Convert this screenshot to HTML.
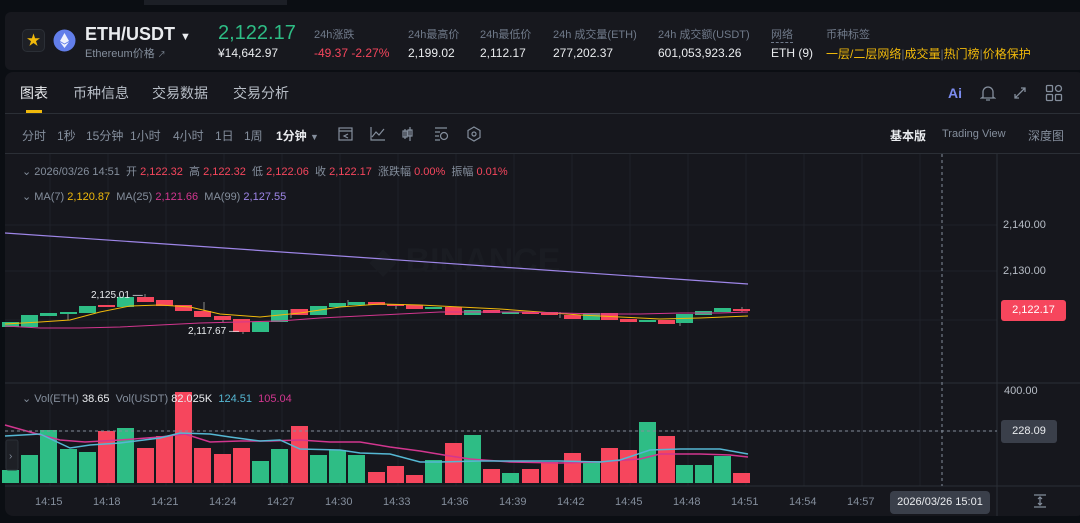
<!DOCTYPE html>
<html><head><meta charset="utf-8"><style>
*{margin:0;padding:0;box-sizing:border-box}
body{width:1080px;height:523px;overflow:hidden;background:#0b0e13;font-family:"Liberation Sans","Noto Sans CJK SC",sans-serif;position:relative;color:#eaecef}
.p{position:absolute;white-space:nowrap}
.g{color:#848e9c}
.hd{position:absolute;left:5px;top:12px;width:1080px;height:58px;background:#17181e;border-radius:6px}
.ch{position:absolute;left:5px;top:72px;width:1080px;height:444px;background:#16171d;border-radius:8px}
.lab{font-size:11px;color:#707a8a}
.val{font-size:12px;color:#eaecef}
</style></head><body>
<div class="p" style="left:144px;top:0;width:143px;height:5px;background:#1c1f26"></div>
<div class="hd"></div>
<div class="ch"></div>
<!-- header -->
<div class="p" style="left:22px;top:29px;width:23px;height:23px;border:1px solid #2b2f36;border-radius:5px;background:#1e2026;color:#f0b90b;font-size:14px;text-align:center;line-height:21px">★</div>
<svg class="p" style="left:53px;top:29px" width="23" height="23"><circle cx="11.5" cy="11.5" r="11" fill="#627eea"/><path d="M11.5 4 L7 12 L11.5 14.5 L16 12Z M7 13 L11.5 19 L16 13 L11.5 15.5Z" fill="#fff" opacity=".9"/></svg>
<div class="p" style="left:85px;top:24px;font-size:18px;font-weight:bold;color:#eaecef">ETH/USDT <span style="font-size:11px">▼</span></div>
<div class="p g" style="left:85px;top:45px;font-size:11px">Ethereum价格 <span style="font-size:8px">↗</span></div>
<div class="p" style="left:218px;top:22px;font-size:20px;color:#2ebd85">2,122.17</div>
<div class="p val" style="left:218px;top:46px">¥14,642.97</div>
<div class="p lab" style="left:314px;top:26px">24h涨跌</div>
<div class="p val" style="left:314px;top:46px;color:#f6465d">-49.37 -2.27%</div>
<div class="p lab" style="left:408px;top:26px">24h最高价</div>
<div class="p val" style="left:408px;top:46px">2,199.02</div>
<div class="p lab" style="left:480px;top:26px">24h最低价</div>
<div class="p val" style="left:480px;top:46px">2,112.17</div>
<div class="p lab" style="left:553px;top:26px">24h 成交量(ETH)</div>
<div class="p val" style="left:553px;top:46px">277,202.37</div>
<div class="p lab" style="left:658px;top:26px">24h 成交额(USDT)</div>
<div class="p val" style="left:658px;top:46px">601,053,923.26</div>
<div class="p lab" style="left:771px;top:26px;border-bottom:1px dashed #707a8a">网络</div>
<div class="p val" style="left:771px;top:46px">ETH (9)</div>
<div class="p lab" style="left:826px;top:26px">币种标签</div>
<div class="p val" style="left:826px;top:45px;color:#f0b90b">一层/二层网络<span style="color:#5e6673">|</span>成交量<span style="color:#5e6673">|</span>热门榜<span style="color:#5e6673">|</span>价格保护</div>
<!-- tabs -->
<div class="p" style="left:20px;top:83px;font-size:14px;color:#eaecef">图表</div>
<div class="p" style="left:26px;top:110px;width:16px;height:3px;background:#f0b90b"></div>
<div class="p g" style="left:73px;top:83px;font-size:14px;color:#b7bdc6">币种信息</div>
<div class="p g" style="left:152px;top:83px;font-size:14px;color:#b7bdc6">交易数据</div>
<div class="p g" style="left:233px;top:83px;font-size:14px;color:#b7bdc6">交易分析</div>
<div class="p" style="left:5px;top:113px;width:1075px;height:1px;background:#2b2f36"></div>
<div class="p" style="left:948px;top:85px;font-size:14px;font-weight:bold;color:#7c8cf0">Ai</div>
<svg class="p" style="left:980px;top:84px" width="16" height="18" fill="none" stroke="#848e9c" stroke-width="1.3"><path d="M3 13 L3 8 A5 5 0 0 1 13 8 L13 13 L14.5 14 L1.5 14Z M6 16 L10 16"/></svg>
<svg class="p" style="left:1012px;top:85px" width="16" height="16" stroke="#848e9c" stroke-width="1.3" fill="none"><path d="M3 13 L13 3 M9 3 L13 3 L13 7 M3 9 L3 13 L7 13"/></svg>
<svg class="p" style="left:1045px;top:84px" width="18" height="18" fill="none" stroke="#848e9c" stroke-width="1.3"><rect x="1.5" y="1.5" width="6" height="6" rx="1"/><circle cx="13.5" cy="4.5" r="3"/><rect x="1.5" y="10.5" width="6" height="6" rx="1"/><rect x="10.5" y="10.5" width="6" height="6" rx="1"/></svg>
<!-- toolbar -->
<div class="p g" style="left:22px;top:127px;font-size:12px">分时</div>
<div class="p g" style="left:57px;top:127px;font-size:12px">1秒</div>
<div class="p g" style="left:86px;top:127px;font-size:12px">15分钟</div>
<div class="p g" style="left:130px;top:127px;font-size:12px">1小时</div>
<div class="p g" style="left:173px;top:127px;font-size:12px">4小时</div>
<div class="p g" style="left:215px;top:127px;font-size:12px">1日</div>
<div class="p g" style="left:244px;top:127px;font-size:12px">1周</div>
<div class="p" style="left:276px;top:127px;font-size:12px;font-weight:bold;color:#eaecef">1分钟 <span style="color:#848e9c;font-size:9px">▼</span></div>
<svg class="p" style="left:336px;top:125px" width="150" height="18" fill="none" stroke="#848e9c" stroke-width="1.2">
<rect x="3" y="3" width="13" height="12"/><path d="M3 6 H16 M12 9 L8 11 L12 13"/>
<path d="M35 2 V15 H49 M36 12 L40 7 L43 10 L48 4"/>
<path d="M69 4 V14 M74 2 V16 M67 6 H71 V12 H67Z M72 5 H76 V11 H72Z"/>
<path d="M99 3 H111 M99 7 H104 M99 11 H103 M99 15 H104"/><circle cx="108" cy="11" r="3.5"/>
<path d="M138 2 L144 5.5 V12.5 L138 16 L132 12.5 V5.5Z"/><circle cx="138" cy="9" r="2"/>
</svg>
<div class="p" style="left:890px;top:127px;font-size:12px;font-weight:bold;color:#eaecef">基本版</div>
<div class="p g" style="left:942px;top:128px;font-size:11px">Trading View</div>
<div class="p g" style="left:1028px;top:127px;font-size:12px">深度图</div>
<div class="p" style="left:5px;top:153px;width:1075px;height:1px;background:#2b2f36"></div>
<!-- chart -->
<svg class="p" style="left:0;top:0" width="1080" height="523">
<g stroke="#1f2229" stroke-width="1">
<path d="M50 154V486M108 154V486M166 154V486M224 154V486M282 154V486M340 154V486M398 154V486M456 154V486M514 154V486M572 154V486M630 154V486M688 154V486M746 154V486M804 154V486M862 154V486M920 154V486"/>
<path d="M5 225H997M5 271H997M5 320H997M5 431H997"/>
</g>
<path d="M5 383H1080M5 486H1080M997 154V516" stroke="#2b2f36"/>
<text x="370" y="272" font-size="34" font-weight="bold" fill="#1a1c22" font-family="Liberation Sans">◆ BINANCE</text>
<path d="M5 233 L748 284" stroke="#9e86e8" stroke-width="1.2"/>
<g stroke-width="1">
<path d="M68 312V320M145 294V302M204 302V316M223 316V322M243 319V334M291 309V318M348 300V306M396 304V309M560 312V318M680 314V326M742 307V312" stroke="#888"/>
</g>
<g fill="#2ebd85">
<rect x="2" y="322" width="17" height="5"/><rect x="21" y="315" width="17" height="12"/><rect x="40" y="313" width="17" height="3"/><rect x="60" y="312" width="17" height="2"/><rect x="79" y="306" width="17" height="7"/><rect x="117" y="297" width="17" height="10"/><rect x="252" y="322" width="17" height="10"/><rect x="271" y="310" width="17" height="12"/><rect x="310" y="306" width="17" height="9"/><rect x="329" y="303" width="17" height="4"/><rect x="348" y="302" width="17" height="3"/><rect x="425" y="307" width="17" height="2"/><rect x="464" y="310" width="17" height="5"/><rect x="502" y="312" width="17" height="2"/><rect x="583" y="313" width="17" height="7"/><rect x="639" y="320" width="17" height="2"/><rect x="676" y="314" width="17" height="9"/><rect x="695" y="311" width="17" height="4"/><rect x="714" y="308" width="17" height="4"/>
</g>
<g fill="#f6465d">
<rect x="98" y="305" width="17" height="2"/><rect x="137" y="297" width="17" height="5"/><rect x="156" y="300" width="17" height="6"/><rect x="175" y="305" width="17" height="6"/><rect x="194" y="311" width="17" height="6"/><rect x="214" y="316" width="17" height="4"/><rect x="233" y="319" width="17" height="13"/><rect x="291" y="309" width="17" height="6"/><rect x="368" y="302" width="17" height="3"/><rect x="387" y="304" width="17" height="2"/><rect x="406" y="305" width="17" height="4"/><rect x="445" y="307" width="17" height="8"/><rect x="483" y="310" width="17" height="3"/><rect x="522" y="312" width="17" height="2"/><rect x="541" y="312" width="17" height="3"/><rect x="564" y="315" width="17" height="4"/><rect x="601" y="313" width="17" height="7"/><rect x="620" y="319" width="17" height="3"/><rect x="658" y="320" width="17" height="4"/><rect x="733" y="309" width="17" height="2"/>
</g>
<polyline fill="none" stroke="#f0b90b" stroke-width="1" points="5,324 40,322 70,320 100,312 130,306 160,305 190,307 220,314 260,317 300,313 340,307 380,304 420,305 460,307 500,309 540,312 580,315 620,317 660,319 700,318 748,316"/>
<polyline fill="none" stroke="#d2368f" stroke-width="1" points="5,326 40,328 80,328 120,327 160,325 200,323 240,322 280,321 320,318 360,316 400,314 440,312 480,312 520,312 560,313 600,314 640,314 680,313 720,313 748,312"/>
<text x="91" y="298" font-size="10" fill="#eaecef">2,125.01 —</text>
<text x="188" y="334" font-size="10" fill="#eaecef">2,117.67 —</text>
<g fill="#2ebd85">
<rect x="2" y="470" width="17" height="13"/><rect x="21" y="455" width="17" height="28"/><rect x="40" y="430" width="17" height="53"/><rect x="60" y="449" width="17" height="34"/><rect x="79" y="452" width="17" height="31"/><rect x="117" y="428" width="17" height="55"/><rect x="252" y="461" width="17" height="22"/><rect x="271" y="449" width="17" height="34"/><rect x="310" y="455" width="17" height="28"/><rect x="329" y="450" width="17" height="33"/><rect x="348" y="455" width="17" height="28"/><rect x="425" y="460" width="17" height="23"/><rect x="464" y="435" width="17" height="48"/><rect x="502" y="473" width="17" height="10"/><rect x="583" y="461" width="17" height="22"/><rect x="639" y="422" width="17" height="61"/><rect x="676" y="465" width="17" height="18"/><rect x="695" y="465" width="17" height="18"/><rect x="714" y="456" width="17" height="27"/>
</g>
<g fill="#f6465d">
<rect x="98" y="431" width="17" height="52"/><rect x="137" y="448" width="17" height="35"/><rect x="156" y="436" width="17" height="47"/><rect x="175" y="392" width="17" height="91"/><rect x="194" y="448" width="17" height="35"/><rect x="214" y="454" width="17" height="29"/><rect x="233" y="448" width="17" height="35"/><rect x="291" y="426" width="17" height="57"/><rect x="368" y="472" width="17" height="11"/><rect x="387" y="466" width="17" height="17"/><rect x="406" y="475" width="17" height="8"/><rect x="445" y="443" width="17" height="40"/><rect x="483" y="469" width="17" height="14"/><rect x="522" y="469" width="17" height="14"/><rect x="541" y="462" width="17" height="21"/><rect x="564" y="453" width="17" height="30"/><rect x="601" y="448" width="17" height="35"/><rect x="620" y="450" width="17" height="33"/><rect x="658" y="436" width="17" height="47"/><rect x="733" y="473" width="17" height="10"/>
</g>
<polyline fill="none" stroke="#d2368f" stroke-width="1.5" points="5,425 30,432 60,440 85,442 120,440 160,437 185,434 210,442 240,441 270,441 300,440 330,442 360,442 390,447 420,451 450,456 470,459 510,462 560,463 600,462 640,459 660,454 700,454 730,455 748,457"/>
<polyline fill="none" stroke="#55b7d3" stroke-width="1.5" points="5,436 40,434 70,448 90,445 120,443 160,438 180,433 210,434 230,437 260,441 280,440 300,449 340,450 360,453 390,454 420,462 440,462 480,461 520,461 560,461 600,462 620,460 650,450 680,449 720,449 748,454"/>
<path d="M5 431 H997" stroke="#848e9c" stroke-dasharray="3,3"/>
<path d="M942 154 V486" stroke="#848e9c" stroke-dasharray="3,3"/>
<rect x="6" y="440" width="12" height="30" rx="2" fill="#1e2026" stroke="#2b2f36"/>
<text x="9" y="459" font-size="10" fill="#848e9c">›</text>
</svg>
<div class="p g" style="left:22px;top:163px;font-size:11px">⌄ 2026/03/26 14:51 &nbsp;开 <span style="color:#f6465d">2,122.32</span>&nbsp; 高 <span style="color:#f6465d">2,122.32</span>&nbsp; 低 <span style="color:#f6465d">2,122.06</span>&nbsp; 收 <span style="color:#f6465d">2,122.17</span>&nbsp; 涨跌幅 <span style="color:#f6465d">0.00%</span>&nbsp; 振幅 <span style="color:#f6465d">0.01%</span></div>
<div class="p g" style="left:22px;top:190px;font-size:11px">⌄ MA(7) <span style="color:#f0b90b">2,120.87</span>&nbsp; MA(25) <span style="color:#d2368f">2,121.66</span>&nbsp; MA(99) <span style="color:#9e86e8">2,127.55</span></div>
<div class="p g" style="left:22px;top:392px;font-size:11px">⌄ Vol(ETH) <span style="color:#eaecef">38.65</span>&nbsp; Vol(USDT) <span style="color:#eaecef">82.025K</span>&nbsp; <span style="color:#55b7d3">124.51</span>&nbsp; <span style="color:#d2368f">105.04</span></div>
<!-- axis -->
<div class="p g" style="left:1003px;top:219px;font-size:11px;color:#b7bdc6">2,140.00</div>
<div class="p g" style="left:1003px;top:265px;font-size:11px;color:#b7bdc6">2,130.00</div>
<div class="p" style="left:1001px;top:300px;width:65px;height:21px;background:#f6465d;border-radius:3px;font-size:11px;color:#fff;line-height:21px;text-align:center">2,122.17</div>
<div class="p g" style="left:1004px;top:385px;font-size:11px;color:#b7bdc6">400.00</div>
<div class="p" style="left:1001px;top:420px;width:56px;height:23px;background:#3a3f4a;border-radius:3px;font-size:11px;color:#eaecef;line-height:23px;text-align:center">228.09</div>
<div class="p g" style="left:35px;top:496px;font-size:11px">14:15</div>
<div class="p g" style="left:93px;top:496px;font-size:11px">14:18</div>
<div class="p g" style="left:151px;top:496px;font-size:11px">14:21</div>
<div class="p g" style="left:209px;top:496px;font-size:11px">14:24</div>
<div class="p g" style="left:267px;top:496px;font-size:11px">14:27</div>
<div class="p g" style="left:325px;top:496px;font-size:11px">14:30</div>
<div class="p g" style="left:383px;top:496px;font-size:11px">14:33</div>
<div class="p g" style="left:441px;top:496px;font-size:11px">14:36</div>
<div class="p g" style="left:499px;top:496px;font-size:11px">14:39</div>
<div class="p g" style="left:557px;top:496px;font-size:11px">14:42</div>
<div class="p g" style="left:615px;top:496px;font-size:11px">14:45</div>
<div class="p g" style="left:673px;top:496px;font-size:11px">14:48</div>
<div class="p g" style="left:731px;top:496px;font-size:11px">14:51</div>
<div class="p g" style="left:789px;top:496px;font-size:11px">14:54</div>
<div class="p g" style="left:847px;top:496px;font-size:11px">14:57</div>
<div class="p" style="left:890px;top:491px;width:100px;height:23px;background:#3a3f4a;border-radius:4px;font-size:11px;color:#eaecef;line-height:23px;text-align:center">2026/03/26 15:01</div>
<svg class="p" style="left:1032px;top:493px" width="16" height="16" stroke="#848e9c" fill="none" stroke-width="1.2"><path d="M2 2H14M2 14H14M8 4V12M6 6L8 4L10 6M6 10L8 12L10 10"/></svg>
</body></html>
